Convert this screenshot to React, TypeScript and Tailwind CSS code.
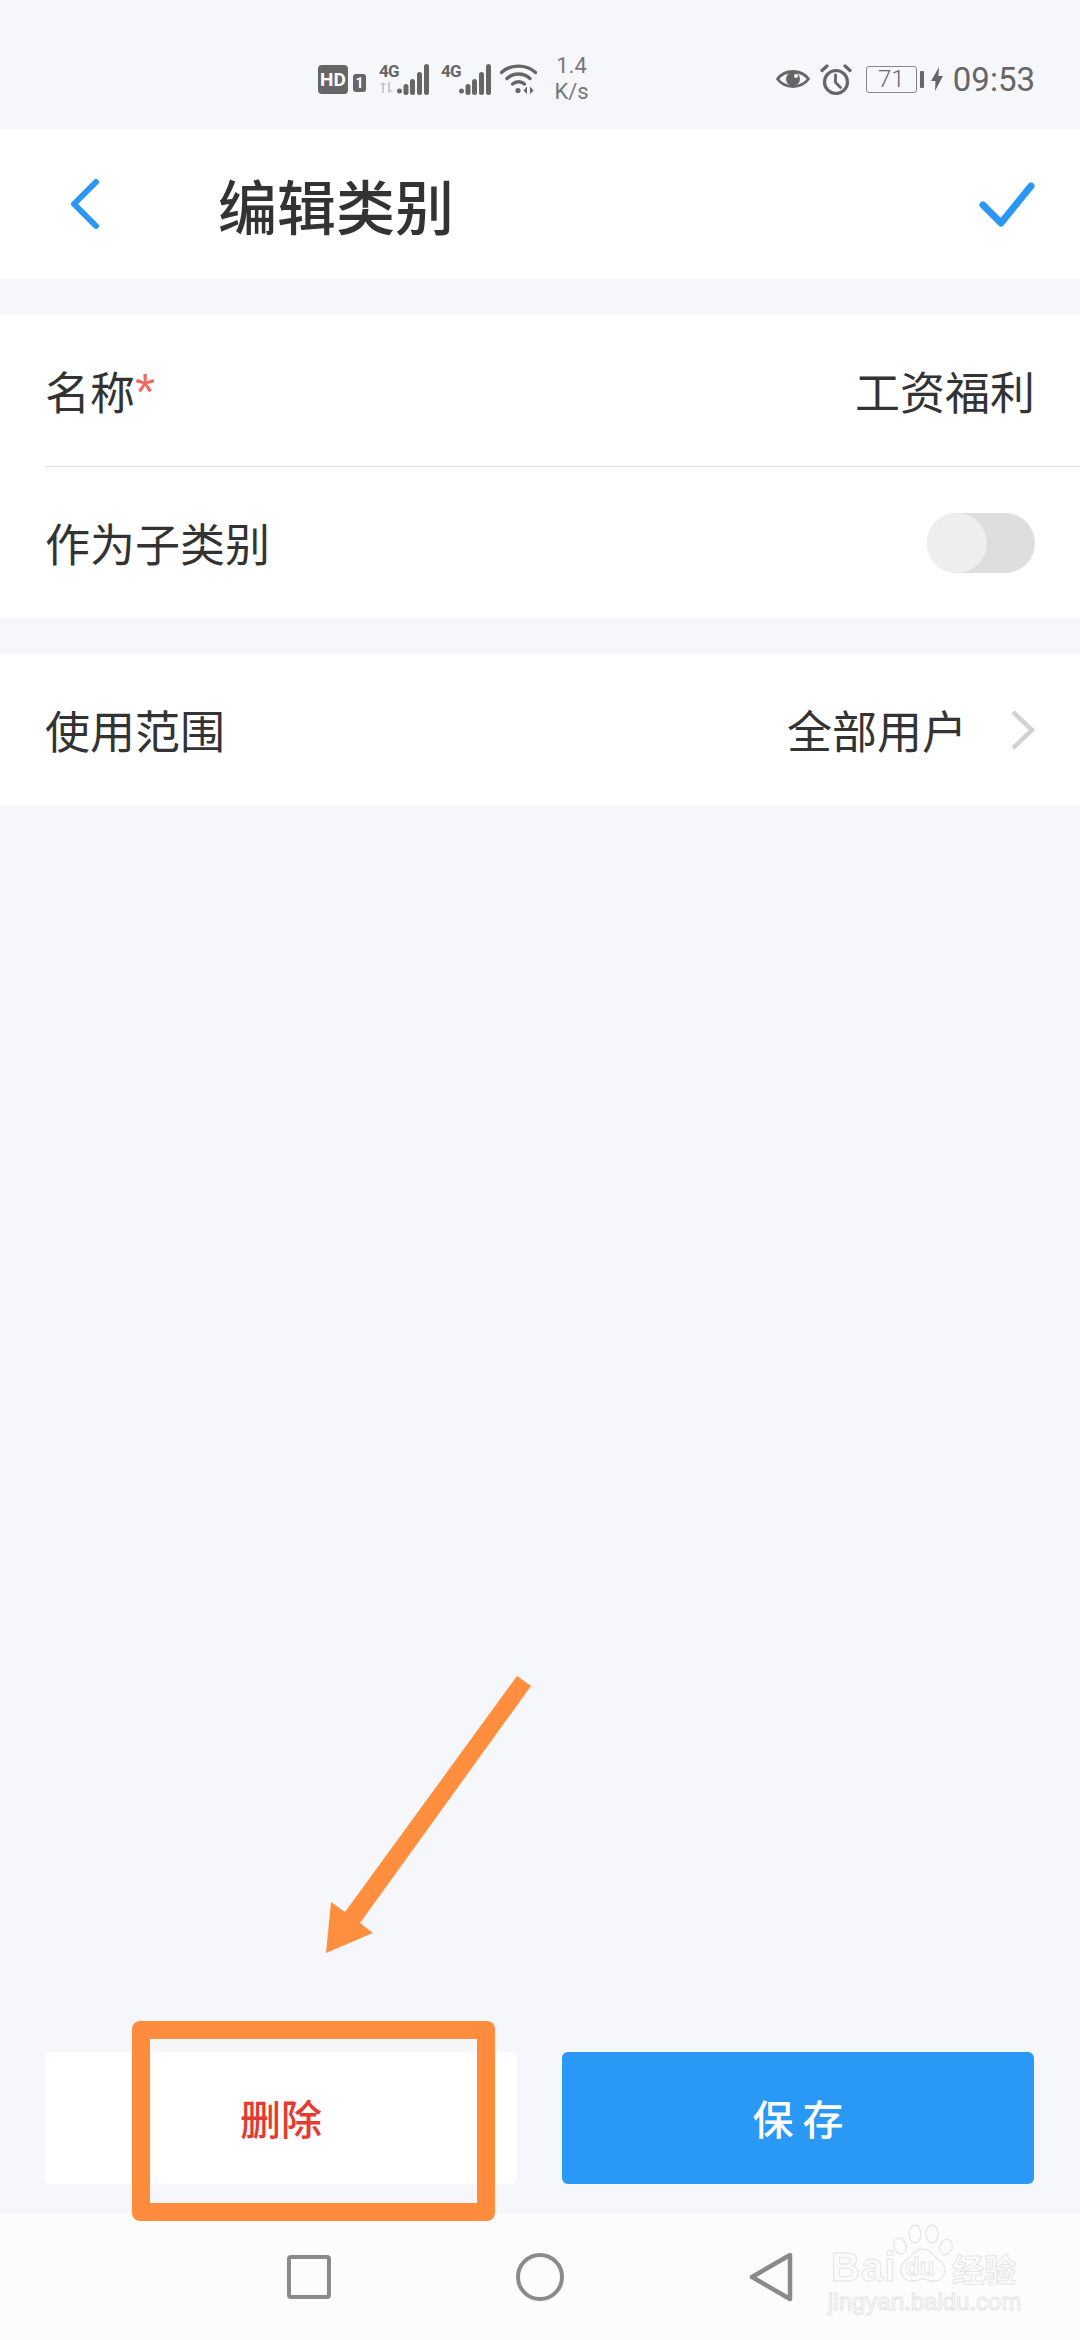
const FONT = "font-['Noto_Sans_CJK_SC','Noto_Sans',sans-serif]";

function SignalBars() {
  return (
    <svg width="32" height="31" viewBox="0 0 32 31" fill="#666">
      <circle cx="2.5" cy="27" r="2.5" />
      <rect x="6.5" y="20" width="5" height="11" rx="2.5" />
      <rect x="13" y="15" width="5" height="16" rx="2.5" />
      <rect x="20" y="8" width="5" height="23" rx="2.5" />
      <rect x="27" y="0" width="5" height="31" rx="2.5" />
    </svg>
  );
}

function Signal({ arrows }: { arrows?: boolean }) {
  return (
    <div className="flex items-end">
      <div className="flex h-[31px] w-[18px] flex-col">
        <span className="font-['Roboto',sans-serif] text-[17px] font-bold leading-[14px] tracking-[-0.8px] text-[#666]">
          4G
        </span>
        {arrows && (
          <svg className="mt-[4px]" width="17" height="11" viewBox="0 0 17 11" fill="#c9c9c9">
            <path d="M1 3 4 0l3 3H5v8H3V3zM9 0h2v8h3l-4 3-1-1z" />
          </svg>
        )}
      </div>
      <SignalBars />
    </div>
  );
}

function StatusBar() {
  return (
    <div className="flex h-[129px] items-center justify-between pl-[318px] pr-[45px] pt-[29px] font-['Roboto',sans-serif] text-[#666]">
      <div className="flex items-center">
        <div className="flex h-[29px] w-[30px] items-center justify-center rounded-[4px] bg-[#666] text-[19px] font-bold leading-none text-white">
          HD
        </div>
        <div className="ml-[5px] mt-[8px] flex h-[18px] w-[13px] items-center justify-center rounded-[3px] bg-[#666] text-[14px] font-bold leading-none text-white">
          1
        </div>
        <div className="ml-[13px]">
          <Signal arrows />
        </div>
        <div className="ml-[12px]">
          <Signal />
        </div>
        <svg className="ml-[9px]" width="37" height="30" viewBox="0 0 37 30" fill="none" stroke="#666" strokeWidth="3.4" strokeLinecap="round">
          <path d="M1.5 8.5C10.5 0 26.5 0 35.5 8.5" />
          <path d="M7 14.5c6.5-6 16.5-6 23 0" />
          <path d="M12.5 20c3.500-3 8.500-3 12 0" />
          <circle cx="18" cy="26.500" r="2.600" fill="#666" stroke="none" />
          <path d="M27 22.500l-3.500 4 3.500 3.500zM30 22.500l3.500 4-3.500 3.500z" fill="#666" stroke="none" />
        </svg>
        <div className="ml-[18px] flex w-[33px] flex-col items-center text-[22px] leading-[26px] text-[#777]">
          <span>1.4</span>
          <span>K/s</span>
        </div>
      </div>
      <div className="flex items-center">
        <svg width="34" height="26" viewBox="0 0 34 26" fill="none">
          <path d="M1.500 13C9 3 25 3 32.500 13 25 23 9 23 1.500 13z" stroke="#666" strokeWidth="2.800" strokeLinejoin="round" />
          <circle cx="17" cy="13" r="7" fill="#666" />
          <circle cx="20" cy="10" r="2" fill="#f6f7fb" />
        </svg>
        <svg className="ml-[10px]" width="32" height="31" viewBox="0 0 32 31" fill="none" stroke="#666" strokeLinecap="round">
          <circle cx="16" cy="18" r="11.500" strokeWidth="3.200" />
          <path d="M15.500 11v7.500l5 5" strokeWidth="2.800" />
          <path d="M2 6.500 7 2M30 6.500 25 2" strokeWidth="3.200" />
        </svg>
        <div className="ml-[14px] flex h-[27px] w-[51px] items-center justify-center rounded-[3px] border-[1.5px] border-[#888] text-[24px] font-light leading-none">
          71
        </div>
        <div className="ml-[3px] h-[17px] w-[4px] rounded-[1px] bg-[#666]" />
        <svg className="ml-[7px]" width="12" height="24" viewBox="0 0 12 24" fill="#666">
          <path d="M8 0 0 14h4.500L4 24l8-15H7.500z" />
        </svg>
        <span className="ml-[10px] text-[33px] leading-none">09:53</span>
      </div>
    </div>
  );
}

function Watermark() {
  return (
    <div className="absolute left-[828px] top-[2224px] h-[92px] w-[196px] select-none text-transparent [-webkit-text-stroke:1px_#e6e6e6]">
      <svg className="absolute left-[65px] top-0" width="60" height="60" viewBox="0 0 60 60" fill="#fcfcfc" stroke="#e6e6e6" strokeWidth="1.300">
        <ellipse cx="7" cy="22" rx="6" ry="8" transform="rotate(-22 7 22)" />
        <ellipse cx="22" cy="10" rx="6" ry="9" />
        <ellipse cx="39" cy="10" rx="6" ry="9" />
        <ellipse cx="53" cy="23" rx="6" ry="8" transform="rotate(22 53 23)" />
        <path d="M30 25c9 0 10 8 17 12 9 6 5 21-7 20-5 0-7-2-10-2s-6 2-11 2C8 57 4 44 12 37c7-4 9-12 18-12z" />
      </svg>
      <span className="absolute left-[3px] top-[20px] font-['Liberation_Sans',sans-serif] text-[40px] font-bold leading-[46px] tracking-[1px]">
        Bai
      </span>
      <span className="absolute left-[77px] top-[29px] font-['Liberation_Sans',sans-serif] text-[24px] font-bold leading-[28px]">
        du
      </span>
      <span className={`absolute left-[124px] top-[25px] ${FONT} text-[32px] font-bold leading-[38px]`}>
        经验
      </span>
      <span className="absolute left-0 top-[64px] whitespace-nowrap font-['Liberation_Sans',sans-serif] text-[24px] leading-[28px]">
        jingyan.baidu.com
      </span>
    </div>
  );
}

export default function App() {
  return (
    <div className={`relative flex h-[2340px] w-[1080px] flex-col overflow-hidden bg-[#f6f7fb] ${FONT} text-[#333]`}>
      <StatusBar />

      {/* Header */}
      <div className="flex h-[150px] items-center justify-between bg-white pl-[70px] pr-[45px]">
        <div className="flex items-center">
          <svg width="30" height="52" viewBox="0 0 30 52" fill="none" stroke="#2a98f3" strokeWidth="6" strokeLinecap="round" strokeLinejoin="round">
            <path d="M26 4 4 26l22 22" />
          </svg>
          <h1 className="ml-[118px] text-[59px] font-medium leading-none">编辑类别</h1>
        </div>
        <svg width="56" height="46" viewBox="0 0 56 46" fill="none" stroke="#2a98f3" strokeWidth="7" strokeLinecap="round" strokeLinejoin="round">
          <path d="M4 24l18 18L52 5" />
        </svg>
      </div>

      {/* Name + sub category */}
      <div className="mt-[36px] bg-white">
        <div className="flex h-[151px] items-center justify-between pl-[45px] pr-[45px] text-[45px]">
          <div className="flex items-center">
            <span>名称</span>
            <span className="mt-[2px] font-['Liberation_Sans',sans-serif] text-[52px] leading-none text-[#ef6a5f]">*</span>
          </div>
          <span>工资福利</span>
        </div>
        <div className="ml-[45px] h-px bg-[#e3e3e3]" />
        <div className="flex h-[151px] items-center justify-between pl-[45px] pr-[45px] text-[45px]">
          <span>作为子类别</span>
          <div className="flex h-[60px] w-[108px] rounded-full bg-[#dedede]">
            <div className="h-[60px] w-[60px] rounded-full bg-[#eeeeee]" />
          </div>
        </div>
      </div>

      {/* Scope */}
      <div className="mt-[36px] flex h-[151px] items-center justify-between bg-white pl-[45px] pr-[45px] text-[45px]">
        <span>使用范围</span>
        <div className="flex items-center">
          <span>全部用户</span>
          <svg className="ml-[44px]" width="24" height="40" viewBox="0 0 24 40" fill="none" stroke="#d2d2d2" strokeWidth="4.500">
            <path d="M2 2l19 18L2 38" />
          </svg>
        </div>
      </div>

      <div className="flex-1" />

      {/* Actions */}
      <div className="flex gap-[45px] pb-[30px] pl-[45px] pr-[46px]">
        <button className="h-[132px] flex-1 rounded-[6px] bg-white text-[41px] font-medium text-[#e53a32]">删除</button>
        <button className="h-[132px] flex-1 rounded-[6px] bg-[#2a98f5] text-[41px] font-medium text-white">保 存</button>
      </div>

      {/* System nav */}
      <div className="flex h-[126px] items-center gap-[185px] bg-[#fcfcfc] pl-[287px]">
        <div className="h-[44px] w-[44px] rounded-[4px] border-[4px] border-[#8a8a8a]" />
        <div className="h-[48px] w-[48px] rounded-full border-[4px] border-[#8a8a8a]" />
        <svg width="44" height="50" viewBox="0 0 44 50" fill="none" stroke="#8a8a8a" strokeWidth="4.500" strokeLinejoin="round">
          <path d="M3 25 41 3v44z" />
        </svg>
      </div>

      <Watermark />

      {/* Annotation: orange box + arrow */}
      <div className="absolute left-[132px] top-[2021px] h-[200px] w-[363px] rounded-[8px] border-[18px] border-[#ff8c3c]" />
      <svg className="absolute left-0 top-0" width="1080" height="2340" fill="#ff8f3e">
        <polygon points="517,1676 531,1686 360,1923 373,1933 326,1953 331,1902 345,1912" />
      </svg>
    </div>
  );
}
